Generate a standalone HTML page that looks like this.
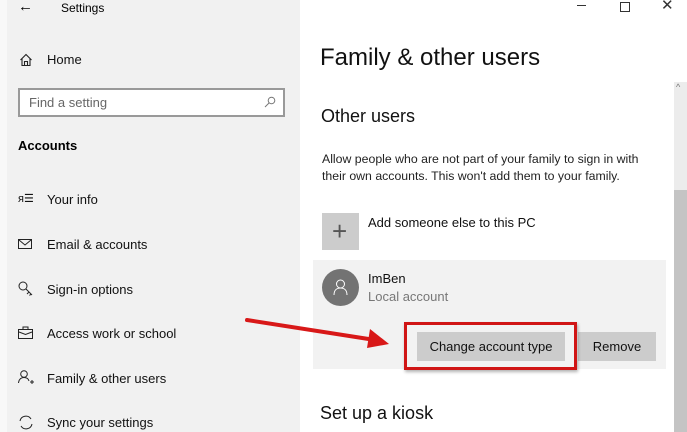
<!DOCTYPE html>
<html><head><meta charset="utf-8"><style>
*{margin:0;padding:0;box-sizing:border-box}
body{width:687px;height:432px;overflow:hidden;background:#fff;font-family:"Liberation Sans",sans-serif;color:#000;position:relative}
.a{position:absolute;white-space:nowrap}
.side{position:absolute;left:0;top:0;width:300px;height:432px;background:#f1f1f1}
.nav{font-size:13px;color:#111}
</style></head><body>
<div class="side"></div>
<div class="a" style="left:0;top:0;width:7px;height:432px;background:#f8f8f8"></div>
<div class="a" style="left:18px;top:-2px;font-size:15px">←</div>
<div class="a" style="left:61px;top:1px;font-size:12px">Settings</div>
<svg class="a" style="left:19px;top:53px" width="14" height="14" viewBox="0 0 14 14"><path d="M1.5 7 L7 1.5 L12.5 7 M3 5.5 V12.5 H11 V5.5 M5.5 12.5 V8.5 H8.5 V12.5" fill="none" stroke="#222" stroke-width="1.1"/></svg>
<div class="a nav" style="left:47px;top:52px">Home</div>
<div class="a" style="left:18px;top:88px;width:267px;height:29px;border:2px solid #999;background:#fff"></div>
<div class="a" style="left:29px;top:95px;font-size:13px;color:#666">Find a setting</div>
<svg class="a" style="left:264px;top:96px" width="12" height="12" viewBox="0 0 12 12"><circle cx="7.5" cy="4.5" r="3.3" fill="none" stroke="#777"/><path d="M5 7 L1 11" stroke="#777"/></svg>
<div class="a" style="left:18px;top:138px;font-size:13px;font-weight:bold">Accounts</div>
<div class="a nav" style="left:18px;top:192px;font-size:11px">ᴙ☰</div>
<div class="a nav" style="left:47px;top:192px">Your info</div>
<svg class="a" style="left:18px;top:238px" width="15" height="12"><rect x="0.5" y="1.5" width="13" height="9" fill="none" stroke="#222"/><path d="M1 2 L7 7 L13 2" fill="none" stroke="#222"/></svg>
<div class="a nav" style="left:47px;top:237px">Email &amp; accounts</div>
<svg class="a" style="left:18px;top:281px" width="16" height="16"><circle cx="5" cy="5" r="4" fill="none" stroke="#222"/><path d="M8 8 L14 14 M11 11 L9 13 M13 13 L11.5 14.5" fill="none" stroke="#222"/></svg>
<div class="a nav" style="left:47px;top:282px">Sign-in options</div>
<svg class="a" style="left:18px;top:326px" width="16" height="13"><rect x="0.5" y="3.5" width="14" height="9" fill="none" stroke="#222"/><path d="M5 3.5 V1 H10 V3.5 M1 6 L7.5 8.5 L14 6" fill="none" stroke="#222"/></svg>
<div class="a nav" style="left:47px;top:326px">Access work or school</div>
<svg class="a" style="left:18px;top:370px" width="16" height="15"><circle cx="6" cy="4" r="3.3" fill="none" stroke="#222"/><path d="M0.5 13 C1 9 3 7.5 6 7.5 C9 7.5 10.5 9 11 11 M12 12 H16 M14 10 V14" fill="none" stroke="#222"/></svg>
<div class="a nav" style="left:47px;top:371px">Family &amp; other users</div>
<svg class="a" style="left:18px;top:415px" width="16" height="15"><path d="M2 6 A6 6 0 0 1 13 4 M14 9 A6 6 0 0 1 3 11" fill="none" stroke="#222"/></svg>
<div class="a nav" style="left:47px;top:415px">Sync your settings</div>

<div class="a" style="left:577px;top:5px;width:9px;height:1px;background:#333"></div>
<div class="a" style="left:620px;top:2px;width:10px;height:10px;border:1px solid #333"></div>
<div class="a" style="left:661px;top:-4px;font-size:15px;color:#333">✕</div>
<div class="a" style="left:320px;top:44px;font-size:24px;color:#111">Family &amp; other users</div>
<div class="a" style="left:321px;top:106px;font-size:18px;color:#111">Other users</div>
<div class="a" style="left:322px;top:151px;font-size:12.3px;line-height:17px;color:#222">Allow people who are not part of your family to sign in with<br>their own accounts. This won't add them to your family.</div>
<div class="a" style="left:674px;top:82px;width:13px;height:350px;background:#ececec"></div>
<div class="a" style="left:676px;top:82px;font-size:9px;color:#777">^</div>
<div class="a" style="left:674px;top:190px;width:13px;height:242px;background:#c4c4c4"></div>
<div class="a" style="left:322px;top:213px;width:37px;height:37px;background:#cccccc"></div>
<div class="a" style="left:332px;top:216px;font-size:26px;font-weight:300;color:#555">+</div>
<div class="a" style="left:368px;top:215px;font-size:13px;color:#111">Add someone else to this PC</div>
<div class="a" style="left:313px;top:260px;width:353px;height:109px;background:#f2f2f2"></div>
<div class="a" style="left:322px;top:269px;width:37px;height:37px;border-radius:50%;background:#737373"></div>
<svg class="a" style="left:331px;top:278px" width="19" height="19"><circle cx="9.5" cy="6" r="4" fill="none" stroke="#fff"/><path d="M3 17 C3 12 6 10 9.5 10 C13 10 16 12 16 17" fill="none" stroke="#fff"/></svg>
<div class="a" style="left:368px;top:271px;font-size:13px;color:#111">ImBen</div>
<div class="a" style="left:368px;top:289px;font-size:13px;color:#777">Local account</div>
<div class="a" style="left:417px;top:332px;width:148px;height:29px;background:#cccccc;font-size:13px;text-align:center;line-height:29px;color:#111">Change account type</div>
<div class="a" style="left:578px;top:332px;width:78px;height:29px;background:#cccccc;font-size:13px;text-align:center;line-height:29px;color:#111">Remove</div>
<div class="a" style="left:404px;top:322px;width:173px;height:48px;border:3px solid #d01515;box-shadow:1px 2px 3px rgba(0,0,0,.3)"></div>
<svg class="a" style="left:240px;top:312px" width="155" height="40"><path d="M7 8 L135 28" stroke="#d81818" stroke-width="4" stroke-linecap="round"/><path d="M130 17 L149 32 L127 36 Z" fill="#d81818"/></svg>
<div class="a" style="left:320px;top:403px;font-size:18px;color:#111">Set up a kiosk</div>
</body></html>
